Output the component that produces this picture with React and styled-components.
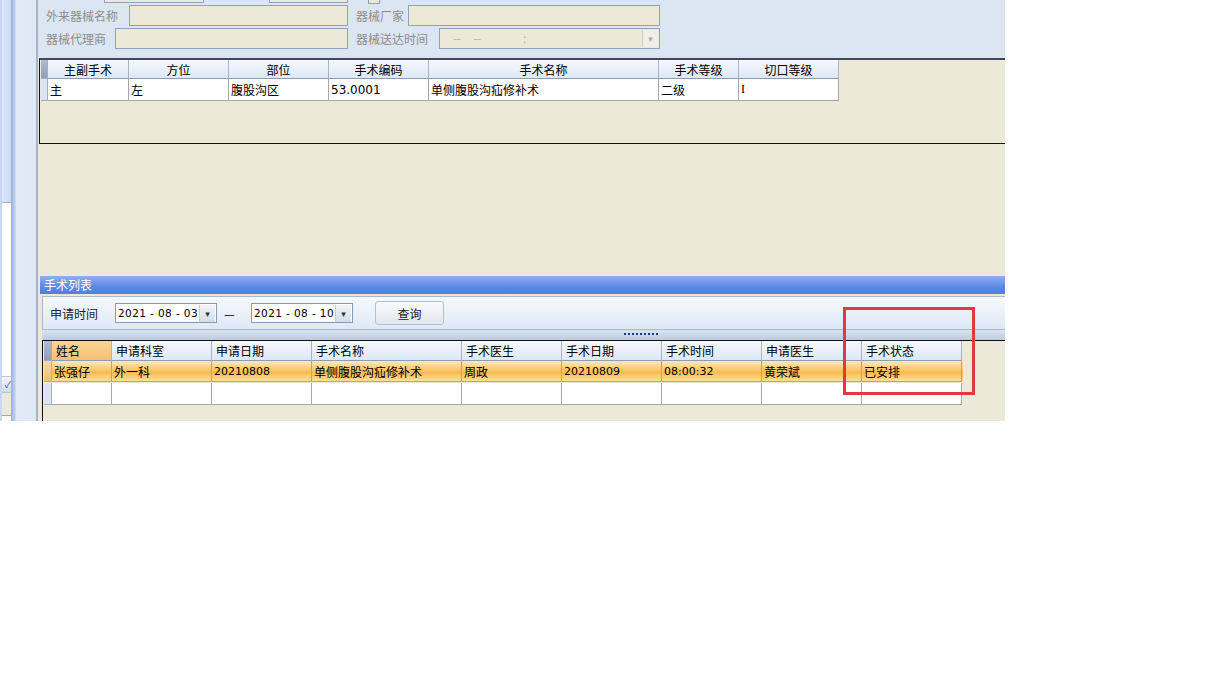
import React from 'react';
import styled, { createGlobalStyle } from 'styled-components';

const GlobalStyle = createGlobalStyle`
  html, body { margin: 0; padding: 0; background: #ffffff; }
  body { font-family: "Noto Sans CJK SC", "DejaVu Sans", sans-serif; font-size: 12px; color: #000; }
`;

const surgeryCols = [
  { title: '主副手术', w: 81, v: '主' },
  { title: '方位', w: 100, v: '左' },
  { title: '部位', w: 100, v: '腹股沟区' },
  { title: '手术编码', w: 100, v: '53.0001', num: true },
  { title: '手术名称', w: 230, v: '单侧腹股沟疝修补术' },
  { title: '手术等级', w: 80, v: '二级' },
  { title: '切口等级', w: 100, v: 'I', serif: true },
];

const listCols = [
  { title: '姓名', w: 60, v: '张强仔', active: true },
  { title: '申请科室', w: 100, v: '外一科' },
  { title: '申请日期', w: 100, v: '20210808', num: true },
  { title: '手术名称', w: 150, v: '单侧腹股沟疝修补术' },
  { title: '手术医生', w: 100, v: '周政' },
  { title: '手术日期', w: 100, v: '20210809', num: true },
  { title: '手术时间', w: 100, v: '08:00:32', num: true },
  { title: '申请医生', w: 100, v: '黄荣斌' },
  { title: '手术状态', w: 100, v: '已安排' },
];

const App = () => {
  return (
    <Page>
      <GlobalStyle />
      <Window>
        <LeftStrip>
          <SideList>
            <SideSelected />
            <SideSpacer />
            <SideButton>✓</SideButton>
            <SideFoot />
          </SideList>
          <Gutter />
        </LeftStrip>

        <Main>
          <FormArea>
            <FormRows>
              <FormRow>
                <Group $w={302}>
                  <Input $w={101} $ml={58} />
                  <Input $w={79} $ml={65} />
                </Group>
                <Group $w={304}>
                  <TinyBox />
                </Group>
              </FormRow>
              <FormRow>
                <Group $w={302}>
                  <Label>外来器械名称</Label>
                  <Input $ml={11} />
                </Group>
                <Group $w={304}>
                  <Label>器械厂家</Label>
                  <Input $ml={4} />
                </Group>
              </FormRow>
              <FormRow>
                <Group $w={302}>
                  <Label>器械代理商</Label>
                  <Input $ml={9} />
                </Group>
                <Group $w={304}>
                  <Label>器械送达时间</Label>
                  <Input $ml={11}>
                    <DisabledText>－　－　　　　：</DisabledText>
                    <DropBtn $disabled>▾</DropBtn>
                  </Input>
                </Group>
              </FormRow>
            </FormRows>
          </FormArea>

          <GridBox>
            <HeadRow>
              <Selector />
              {surgeryCols.map((c) => (
                <HeadCell key={c.title} $w={c.w} $center>{c.title}</HeadCell>
              ))}
            </HeadRow>
            <DataRow>
              <Selector $plain />
              {surgeryCols.map((c) => (
                <Cell key={c.title} $w={c.w} $num={c.num} $serif={c.serif}>{c.v}</Cell>
              ))}
            </DataRow>
          </GridBox>

          <Blank />

          <ListSection>
            <TitleBar>手术列表</TitleBar>
            <Toolbar>
              <ToolLabel>申请时间</ToolLabel>
              <DateBox>
                <DateText>2021 - 08 - 03</DateText>
                <DropBtn>▾</DropBtn>
              </DateBox>
              <Dash>—</Dash>
              <DateBox>
                <DateText>2021 - 08 - 10</DateText>
                <DropBtn>▾</DropBtn>
              </DateBox>
              <QueryButton>查询</QueryButton>
            </Toolbar>
            <Splitter>
              <Grip />
            </Splitter>
            <ListGrid>
              <HeadRow $tall>
                <Selector $w={8} />
                {listCols.map((c) => (
                  <HeadCell key={c.title} $w={c.w} $active={c.active}>{c.title}</HeadCell>
                ))}
              </HeadRow>
              <SelectedRow>
                <Selector $w={8} $orange />
                {listCols.map((c) => (
                  <Cell key={c.title} $w={c.w} $num={c.num} $clear $small={c.num}>{c.v}</Cell>
                ))}
              </SelectedRow>
              <DataRow $h={22}>
                <Selector $w={8} $plain />
                {listCols.map((c) => (
                  <Cell key={c.title} $w={c.w} />
                ))}
              </DataRow>
            </ListGrid>
            <Highlight />
          </ListSection>
        </Main>
      </Window>
    </Page>
  );
};

export default App;

const Page = styled.div`
  width: 1214px;
  height: 696px;
  background: #ffffff;
`;

const Window = styled.div`
  display: flex;
  width: 1005px;
  height: 421px;
  overflow: hidden;
`;

const LeftStrip = styled.div`
  display: flex;
  width: 38px;
  flex-shrink: 0;
  background: #dfe8f6;
  border-right: 2px solid #aab4c4;
  box-sizing: border-box;
`;

const SideList = styled.div`
  width: 9px;
  display: flex;
  flex-direction: column;
  background: #ffffff;
  border-right: 2px solid #9fb7e2;
  border-left: 2px solid #c8d8f2;
`;

const SideSelected = styled.div`
  height: 202px;
  background: linear-gradient(90deg, #dce8fa, #c9daf4);
  border-bottom: 1px solid #9fb4d8;
`;

const SideSpacer = styled.div`
  flex: 1;
  background: #fffffd;
`;

const SideButton = styled.div`
  height: 15px;
  font-size: 9px;
  line-height: 15px;
  color: #4a5e80;
  text-align: right;
  background: linear-gradient(#f2f5fa, #d2dcea);
  border-top: 1px solid #b8c6da;
  border-bottom: 1px solid #b8c6da;
  overflow: hidden;
`;

const SideFoot = styled.div`
  height: 22px;
  background: #ece9d8;
  border-bottom: 1px solid #a0a8b8;
  margin-bottom: 5px;
`;

const Gutter = styled.div`
  flex: 1;
  background: linear-gradient(90deg, #b9cbe8 0, #b9cbe8 2px, #e2eaf6 3px, #dfe8f6 100%);
`;

const Main = styled.div`
  flex: 1;
  display: flex;
  flex-direction: column;
  background: #ece9d8;
  min-width: 0;
`;

const FormArea = styled.div`
  height: 58px;
  flex-shrink: 0;
  background: #dce6f3;
  overflow: hidden;
`;

const FormRows = styled.div`
  display: flex;
  flex-direction: column;
  gap: 2px;
  margin-top: -18px;
  padding-left: 8px;
`;

const FormRow = styled.div`
  display: flex;
  align-items: center;
  gap: 8px;
  height: 21px;
`;

const Group = styled.div`
  display: flex;
  align-items: center;
  width: ${(p) => p.$w}px;
  height: 100%;
`;

const Label = styled.span`
  color: #8c8c8c;
  font-size: 12px;
  white-space: nowrap;
`;

const Input = styled.div`
  position: relative;
  display: flex;
  align-items: center;
  height: 21px;
  box-sizing: border-box;
  margin-left: ${(p) => p.$ml || 0}px;
  ${(p) => (p.$w ? `width: ${p.$w}px;` : 'flex: 1;')}
  background: #ece9d8;
  border: 1px solid #8ea2bd;
`;

const TinyBox = styled.div`
  width: 10px;
  height: 20px;
  margin-left: 12px;
  background: #ece9d8;
  border: 1px solid #8ea2bd;
`;

const DisabledText = styled.span`
  flex: 1;
  color: #b0b0b0;
  font-size: 10px;
  padding-left: 12px;
  white-space: pre;
`;

const DropBtn = styled.div`
  width: 15px;
  height: 17px;
  margin-right: 1px;
  font-size: 9px;
  line-height: 17px;
  text-align: center;
  color: ${(p) => (p.$disabled ? '#a8a8a8' : '#333')};
  background: ${(p) => (p.$disabled ? '#efefe8' : 'linear-gradient(#f2f4f8, #d6dce6)')};
  border-left: 1px solid #c8ced8;
`;

const GridBox = styled.div`
  height: 86px;
  flex-shrink: 0;
  margin-left: 1px;
  box-sizing: border-box;
  border-top: 2px solid #3c4a5c;
  border-left: 1px solid #111;
  border-bottom: 1px solid #111;
  background: #ece9d8;
  padding-left: 1px;
`;

const HeadRow = styled.div`
  display: flex;
  height: ${(p) => (p.$tall ? 20 : 19)}px;
`;

const Selector = styled.div`
  width: ${(p) => p.$w || 7}px;
  flex-shrink: 0;
  box-sizing: border-box;
  background: ${(p) =>
    p.$orange ? 'linear-gradient(#fbd9a0, #f6bd6a)' : p.$plain ? '#dbe4f1' : 'linear-gradient(#aebcce, #8f9fb4)'};
  border-right: 1px solid #a4aec0;
  border-bottom: 1px solid #a4aec0;
`;

const HeadCell = styled.div`
  width: ${(p) => p.$w}px;
  flex-shrink: 0;
  box-sizing: border-box;
  display: flex;
  align-items: center;
  justify-content: ${(p) => (p.$center ? 'center' : 'flex-start')};
  padding-left: ${(p) => (p.$center ? 0 : 4)}px;
  font-size: 12px;
  white-space: nowrap;
  background: ${(p) =>
    p.$active ? 'linear-gradient(#fbd498, #f5c070)' : 'linear-gradient(#f6f9fe, #dde8f7)'};
  border-right: 1px solid #a8b4c6;
  border-bottom: 1px solid #8c9cb4;
`;

const DataRow = styled.div`
  display: flex;
  height: ${(p) => p.$h || 22}px;
`;

const Cell = styled.div`
  width: ${(p) => p.$w}px;
  flex-shrink: 0;
  box-sizing: border-box;
  display: flex;
  align-items: center;
  padding-left: 2px;
  font-size: ${(p) => (p.$small ? 11 : 12)}px;
  font-family: ${(p) =>
    p.$serif ? '"Liberation Serif", serif' : p.$num ? '"DejaVu Sans", sans-serif' : 'inherit'};
  white-space: nowrap;
  background: ${(p) => (p.$clear ? 'transparent' : '#ffffff')};
  border-right: 1px solid #a6a6a6;
  border-bottom: 1px solid #a6a6a6;
`;

const Blank = styled.div`
  height: 132px;
  flex-shrink: 0;
`;

const ListSection = styled.div`
  position: relative;
  flex: 1;
  display: flex;
  flex-direction: column;
  padding-left: 2px;
`;

const TitleBar = styled.div`
  height: 18px;
  line-height: 18px;
  padding-left: 4px;
  color: #ffffff;
  font-size: 12px;
  background: linear-gradient(#8eb0f2, #5b88e6 60%, #4f7fe2);
`;

const Toolbar = styled.div`
  display: flex;
  align-items: center;
  height: 34px;
  flex-shrink: 0;
  margin-top: 2px;
  margin-left: 2px;
  padding-left: 7px;
  box-sizing: border-box;
  background: linear-gradient(#f6f9fd, #dfe8f5);
  border: 1px solid #a8b8cf;
  border-right: none;
`;

const ToolLabel = styled.span`
  font-size: 12px;
  color: #222;
  margin-right: 17px;
`;

const DateBox = styled.div`
  display: flex;
  align-items: center;
  width: 102px;
  height: 20px;
  box-sizing: border-box;
  background: #ffffff;
  border: 1px solid #7f9db9;
`;

const DateText = styled.span`
  flex: 1;
  padding-left: 2px;
  font-family: "DejaVu Sans", sans-serif;
  font-size: 10.5px;
  letter-spacing: 0.4px;
  white-space: pre;
`;

const Dash = styled.span`
  width: 34px;
  padding-left: 7px;
  box-sizing: border-box;
  font-size: 12px;
`;

const QueryButton = styled.div`
  width: 69px;
  height: 24px;
  margin-left: 22px;
  box-sizing: border-box;
  display: flex;
  align-items: center;
  justify-content: center;
  font-size: 12px;
  color: #1a1a1a;
  border: 1px solid #b4c0d2;
  border-radius: 3px;
  background: linear-gradient(#f8f9fb, #e2e7ee);
`;

const Splitter = styled.div`
  height: 10px;
  flex-shrink: 0;
  margin-left: 2px;
  background: linear-gradient(#dbe4f0, #bccbe0);
  padding-left: 581px;
  padding-top: 3px;
  box-sizing: border-box;
`;

const Grip = styled.div`
  width: 36px;
  height: 2px;
  background-image: radial-gradient(circle, #1c3a7a 0.8px, transparent 1px);
  background-size: 4px 2px;
`;

const ListGrid = styled.div`
  flex: 1;
  margin-left: 2px;
  border-top: 1px solid #111;
  border-left: 1px solid #111;
  padding-left: 1px;
  background: #ece9d8;
`;

const SelectedRow = styled.div`
  display: flex;
  height: 21px;
  margin-bottom: 1px;
  width: 919px;
  background: linear-gradient(#fdeac0 0%, #f9c463 45%, #f8bb4f 55%, #fde3a8 100%);
`;

const Highlight = styled.div`
  position: absolute;
  left: 805px;
  top: 31px;
  width: 132px;
  height: 88px;
  box-sizing: border-box;
  border: 3px solid #e4383c;
  pointer-events: none;
`;
